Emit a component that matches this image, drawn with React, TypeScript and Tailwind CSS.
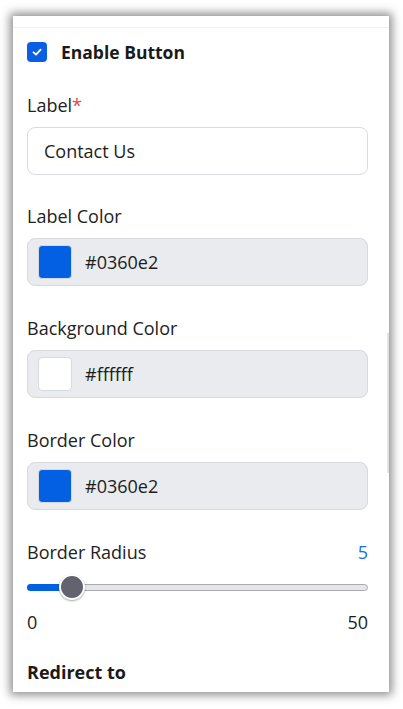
import { useState } from "react";

type ColorFieldProps = { label: string; value: string };

function ColorField({ label, value }: ColorFieldProps) {
  return (
    <div className="flex flex-col">
      <div className="h-[24px] text-[18px] leading-[24px] text-[#222]">{label}</div>
      <div className="mt-[10px] h-[48px] flex items-center rounded-[8px] border border-[#d6d9dd] bg-[#e9ebee] pl-[10px]">
        <div
          className="w-[34px] h-[34px] rounded-[4px] border border-[#d6d9dd]"
          style={{ background: value }}
        />
        <span className="ml-[13px] text-[18px] text-[#1c1c1c]">{value}</span>
      </div>
    </div>
  );
}

export default function App() {
  const [enabled, setEnabled] = useState(true);
  const [radius, setRadius] = useState(5);
  const frac = radius / 50;

  return (
    <div
      className="w-[403px] h-[709px] bg-white pt-[16px] pl-[13px]"
      style={{ fontFamily: '"Open Sans", "Noto Sans", sans-serif' }}
    >
      <div className="relative w-[376px] h-[676px] bg-white shadow-[0_0_9px_3px_rgba(0,0,0,0.45)] overflow-hidden">
        <div className="h-[12px] border-b border-[#f1f2f4]" />
        <div className="absolute right-0 top-[317px] w-[2px] h-[140px] bg-[#e3e3e3]" />

        <div className="pl-[14px] pr-[21px] flex flex-col">
          <label className="mt-[12px] h-[24px] flex items-center gap-[14px] cursor-pointer">
            <button
              type="button"
              onClick={() => setEnabled(!enabled)}
              className="w-[20px] h-[20px] rounded-[4px] bg-[#0b5fe3] flex items-center justify-center"
            >
              {enabled && (
                <svg width="12" height="12" viewBox="0 0 12 12" fill="none">
                  <path
                    d="M2.5 6.3 L5 8.6 L9.6 3.6"
                    stroke="white"
                    strokeWidth="1.8"
                    strokeLinecap="round"
                    strokeLinejoin="round"
                  />
                </svg>
              )}
            </button>
            <span className="text-[17.5px] font-bold text-[#1a1a1a]">Enable Button</span>
          </label>

          <div className="mt-[29px] h-[24px] text-[18px] leading-[24px] text-[#222]">
            Label<span className="text-[#e5434e]">*</span>
          </div>
          <input
            className="mt-[10px] h-[48px] rounded-[8px] border border-[#d9dcdf] bg-white px-[16px] text-[18px] text-[#1c1c1c] outline-none"
            defaultValue="Contact Us"
          />

          <div className="mt-[29px] flex flex-col gap-[30px]">
            <ColorField label="Label Color" value="#0360e2" />
            <ColorField label="Background Color" value="#ffffff" />
            <ColorField label="Border Color" value="#0360e2" />
          </div>

          <div className="mt-[30px] h-[24px] flex justify-between text-[18px] leading-[24px]">
            <span className="text-[#222]">Border Radius</span>
            <span className="text-[#1a6ee8]">{radius}</span>
          </div>

          <div className="relative mt-[10px] h-[26px] flex items-center">
            <div className="w-full h-[7px] rounded-full bg-[#e6e6ea] border border-[#a9a9b2]" />
            <div
              className="absolute left-0 h-[7px] rounded-l-full bg-[#0360e2]"
              style={{ width: `calc(${frac} * (100% - 26px) + 13px)` }}
            />
            <div
              className="absolute w-[26px] h-[26px] rounded-full bg-[#62636f] border-[2px] border-white shadow-[0_1px_2px_rgba(0,0,0,0.35)]"
              style={{ left: `calc(${frac} * (100% - 26px))` }}
            />
            <input
              type="range"
              min={0}
              max={50}
              value={radius}
              onChange={(e) => setRadius(Number(e.target.value))}
              className="absolute inset-0 opacity-0"
            />
          </div>

          <div className="mt-[10px] h-[24px] flex justify-between text-[18px] leading-[24px] text-[#1c1c1c]">
            <span>0</span>
            <span>50</span>
          </div>

          <div className="mt-[26px] h-[24px] text-[18px] leading-[24px] font-bold text-[#1a1a1a]">
            Redirect to
          </div>
        </div>
      </div>
    </div>
  );
}
